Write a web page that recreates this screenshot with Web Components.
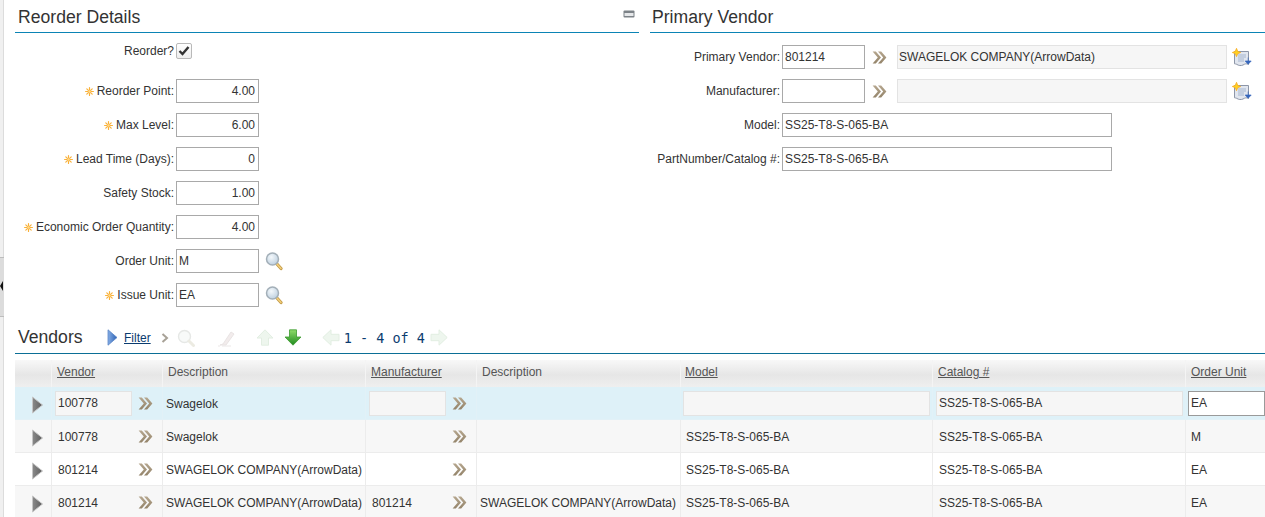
<!DOCTYPE html>
<html>
<head>
<meta charset="utf-8">
<title>Reorder Details</title>
<style>
  html, body { margin: 0; height: 517px; overflow: hidden; background: #fff; }
  body { font: 12px "Liberation Sans", Arial, sans-serif; color: #333; }
</style>
</head>
<body>
<x-shell>
  <x-columns>
    <x-panel title="Reorder Details" pad="1" collapsible>
      <x-field label="Reorder?" no-colon class="first"><x-check></x-check></x-field>
      <x-field label="Reorder Point" required><x-box align="right">4.00</x-box></x-field>
      <x-field label="Max Level" required><x-box align="right">6.00</x-box></x-field>
      <x-field label="Lead Time (Days)" required><x-box align="right">0</x-box></x-field>
      <x-field label="Safety Stock"><x-box align="right">1.00</x-box></x-field>
      <x-field label="Economic Order Quantity" required><x-box align="right">4.00</x-box></x-field>
      <x-field label="Order Unit"><x-box>M</x-box><x-icon name="search" style="margin-left:6px"></x-icon></x-field>
      <x-field label="Issue Unit" required><x-box>EA</x-box><x-icon name="search" style="margin-left:6px"></x-icon></x-field>
    </x-panel>
    <x-panel title="Primary Vendor" pad="7" inset="2" label-width="130px">
      <x-field label="Primary Vendor">
        <x-box>801214</x-box>
        <x-icon name="chevrons" style="margin:0 10px 0 7px"></x-icon>
        <x-box width="330px" readonly>SWAGELOK COMPANY(ArrowData)</x-box>
        <x-icon name="note" style="margin-left:5px"></x-icon>
      </x-field>
      <x-field label="Manufacturer">
        <x-box></x-box>
        <x-icon name="chevrons" style="margin:0 10px 0 7px"></x-icon>
        <x-box width="330px" readonly></x-box>
        <x-icon name="note" style="margin-left:5px"></x-icon>
      </x-field>
      <x-field label="Model"><x-box width="330px">SS25-T8-S-065-BA</x-box></x-field>
      <x-field label="PartNumber/Catalog #"><x-box width="330px">SS25-T8-S-065-BA</x-box></x-field>
    </x-panel>
  </x-columns>
  <x-toolbar title="Vendors"></x-toolbar>
  <x-vendor-table></x-vendor-table>
</x-shell>

<script>
// all the small pictures, drawn to match the old toolbar gifs
const ICONS = {
  star: [9, 9, `<g stroke="#f9b13a" stroke-width="1.2" stroke-linecap="round"><path d="M4.5 .6v7.8M.6 4.5h7.8M1.8 1.8l5.4 5.4M7.2 1.8 1.8 7.2"/></g><circle cx="4.5" cy="4.5" r="1.2" fill="#ffd98a"/>`],
  chevrons: [15, 13, `<defs><linearGradient id="c" x1="0" x2="0" y1="0" y2="1"><stop offset="0" stop-color="#b5a68e"/><stop offset="1" stop-color="#94846a"/></linearGradient></defs>
    <path d="M0.6 .6h3.2L9 6.5 3.8 12.4H.6L5.8 6.5z M6 .6h3.2L14.4 6.5 9.2 12.4H6L11.2 6.5z" fill="url(#c)"/>`],
  search: [18, 20, `<defs><radialGradient id="g" cx=".4" cy=".35" r=".7"><stop offset="0" stop-color="#f4f8fb"/><stop offset="1" stop-color="#bccfdf"/></radialGradient></defs>
    <path d="M11.5 12.5 16 17.5" stroke="#c29a48" stroke-width="3.2" stroke-linecap="round"/><path d="M11.5 12.5 16 17.5" stroke="#f3cf7a" stroke-width="1.5" stroke-linecap="round"/>
    <circle cx="7.5" cy="8" r="6" fill="url(#g)" stroke="#a3afb8" stroke-width="1.5"/>`],
  note: [20, 19, `<path d="M2.5 3.5h14v13c-2-1.3-3.5-.6-5.5.5-2 1-4.5.5-6-.5-.9-.6-2.5-.7-2.5-.7z" fill="#e1e6ef" stroke="#8d96a8"/>
    <path d="M6 7h8M6 9h8M6 11h6M6 13h6" stroke="#a5b6d0"/>
    <path d="M16.2 9.5v3.5M13.2 13h6l-3 3.2z" fill="#3565bb" stroke="#3565bb" stroke-width=".7"/>
    <path d="M4.5 .3 5.7 3.3 8.7 4.5 5.7 5.7 4.5 8.7 3.3 5.7 .3 4.5 3.3 3.3z" fill="#ffd21f" stroke="#f6ac2a" stroke-width=".8"/>`],
  rowArrow: [13, 18, `<defs><linearGradient id="r" x1="0" x2="1"><stop offset="0" stop-color="#8a8a8a"/><stop offset="1" stop-color="#5f5f5f"/></linearGradient></defs>
    <path d="M1.5 1 11.5 9 1.5 17z" fill="url(#r)" stroke="#c5c5c5"/>`],
  filterArrow: [11, 17, `<defs><linearGradient id="b" x1="0" x2="1"><stop offset="0" stop-color="#86aee6"/><stop offset="1" stop-color="#2d62b3"/></linearGradient></defs>
    <path d="M1 .8 10 8.5 1 16.2z" fill="url(#b)" stroke="#5a86c6" stroke-width=".8"/>`],
  gtGray: [8, 10, `<path d="M1.5 1 6 5 1.5 9" fill="none" stroke="#a8a297" stroke-width="2"/>`],
  searchGhost: [18, 18, `<circle cx="7.5" cy="7.5" r="6" fill="#f8faf9" stroke="#e6e8e6" stroke-width="1.4"/><path d="M12 12l4.5 4.5" stroke="#ecebe2" stroke-width="3" stroke-linecap="round"/>`],
  eraserGhost: [18, 18, `<path d="M6 15 14 3l3 2-8 11H3z" fill="#f2ecec" stroke="#e9e4e4"/><path d="M1 17h2M5 17h9" stroke="#ebe7e7"/>`],
  upGhost: [18, 17, `<path d="M9 .8 17 9h-4.5v7.2h-7V9H1z" fill="#eef6ee" stroke="#e2eee2"/>`],
  downGreen: [18, 17, `<defs><linearGradient id="d" x1="0" x2="0" y1="0" y2="1"><stop offset="0" stop-color="#8fdc6a"/><stop offset="1" stop-color="#1f8a1f"/></linearGradient></defs>
    <path d="M5.5 .8h7V8H17l-8 8.2L1 8h4.5z" fill="url(#d)" stroke="#3c9a30" stroke-width=".8"/>`],
  leftGhost: [18, 17, `<path d="M.8 8.5 9 .8v4.5h8v6.4H9v4.5z" fill="#eef6ee" stroke="#e2eee2"/>`],
  rightGhost: [18, 17, `<path d="M17.2 8.5 9 .8v4.5H1v6.4h8v4.5z" fill="#eef6ee" stroke="#e2eee2"/>`],
  minimize: [12, 8, `<rect x=".5" y=".5" width="11" height="7" rx="1" fill="#7d8388"/><rect x="1.5" y="3" width="9" height="3" fill="#e6e8ea"/>`]
};

function define(name, css, html, init) {
  customElements.define(name, class extends HTMLElement {
    connectedCallback() {
      if (this.shadowRoot) return;
      this.attachShadow({ mode: 'open' });
      this.shadowRoot.innerHTML = `<style>${css}</style>${typeof html === 'function' ? html(this) : html}`;
      if (init) init(this);
    }
  });
}

define('x-icon', `
  :host { display: inline-flex; flex: none; line-height: 0; }
`, el => {
  const [w, h, body] = ICONS[el.getAttribute('name')];
  return `<svg width="${w}" height="${h}" viewBox="0 0 ${w} ${h}">${body}</svg>`;
});

define('x-shell', `
  :host { display: flex; height: 517px; }
  .strip { flex: none; width: 3px; height: 517px; background: #f0f0f0; border-right: 1px solid #dcdcdc; position: relative; }
  .grip { margin-top: 257px; height: 60px; background: #dcdcdc; border-top: 1px solid #bdbdbd; border-bottom: 1px solid #bdbdbd; box-sizing: border-box; width: 4px; }
  .tip { position: absolute; left: 0; top: 281px; width: 0; height: 0; border: 5px solid transparent; border-left: 0; border-right: 3px solid #111; }
  .main { flex: 1; min-width: 0; padding-left: 11px; }
`, `<div class="strip"><div class="grip"></div><div class="tip"></div></div><div class="main"><slot></slot></div>`);

define('x-columns', `
  :host { display: grid; grid-template-columns: 624px 615px; column-gap: 11px; height: 320px; }
`, `<slot></slot>`);

define('x-panel', `
  :host { display: block; }
  header { display: flex; justify-content: space-between; height: 32px; border-bottom: 1px solid #0b84b5; padding: 0 4px 0 3px; }
  h2 { margin: 0; font-weight: normal; font-size: 17.6px; line-height: 34px; color: #333; }
  x-icon { margin-top: 10px; }
`, el => `
  <header style="padding-left:${el.getAttribute('inset') || 3}px"><h2>${el.getAttribute('title')}</h2>${el.hasAttribute('collapsible') ? '<x-icon name="minimize"></x-icon>' : ''}</header>
  <div style="padding-top:${el.getAttribute('pad') || 0}px;--label-width:${el.getAttribute('label-width') || '159px'}"><slot></slot></div>
`);

define('x-field', `
  :host { display: flex; align-items: center; height: 34px; }
  :host(.first) { margin-bottom: 6px; }
  label { flex: none; width: var(--label-width); margin-right: 2px; display: flex; justify-content: flex-end; align-items: center; gap: 3px; white-space: nowrap; }
  .controls { display: flex; align-items: center; }
`, el => `
  <label>${el.hasAttribute('required') ? '<x-icon name="star"></x-icon>' : ''}<span>${el.getAttribute('label')}${el.hasAttribute('no-colon') ? '' : ':'}</span></label>
  <div class="controls"><slot></slot></div>
`);

define('x-box', `
  :host { display: block; flex: none; box-sizing: border-box; width: 83px; height: 24px; line-height: 22px; padding: 0 2px; border: 1px solid #a9a9a9; background: #fff; color: #333; white-space: nowrap; overflow: hidden; }
  :host([align=right]) { text-align: right; padding-right: 3px; }
  :host([readonly]) { background: #f6f6f6; border-color: #e3e3e3; padding-left: 1px; }
`, el => {
  if (el.getAttribute('width')) el.style.width = el.getAttribute('width');
  return `<slot></slot>`;
});

define('x-check', `
  :host { display: block; width: 16px; height: 16px; box-sizing: border-box; border: 1px solid #b9b9b9; border-radius: 2px; background: linear-gradient(#fff, #eee); line-height: 0; }
`, `<svg width="14" height="14" viewBox="0 0 14 14"><path d="M2.5 7 5.5 10 11.5 3" fill="none" stroke="#333" stroke-width="2.4"/></svg>`);

define('x-toolbar', `
  :host { display: flex; align-items: center; height: 31px; padding: 2px 0 0 3px; border-bottom: 1px solid #0b6f96; }
  h2 { margin: 0; width: 89px; font-weight: normal; font-size: 17.6px; color: #333; }
  a { color: #0b3c6f; text-decoration: underline; margin: 0 10px 0 6px; }
  x-icon { flex: none; }
  .pages { font: 13.5px "DejaVu Sans Mono", monospace; color: #0b3c6f; margin: 0 5px 0 4px; white-space: pre; }
`, el => `
  <h2>${el.getAttribute('title')}</h2>
  <x-icon name="filterArrow"></x-icon><a href="#">Filter</a>
  <x-icon name="gtGray"></x-icon>
  <x-icon name="searchGhost" style="margin-left:8px"></x-icon>
  <x-icon name="eraserGhost" style="margin-left:22px"></x-icon>
  <x-icon name="upGhost" style="margin-left:21px"></x-icon>
  <x-icon name="downGreen" style="margin-left:10px"></x-icon>
  <x-icon name="leftGhost" style="margin-left:20px"></x-icon>
  <span class="pages">1 - 4 of 4</span>
  <x-icon name="rightGhost"></x-icon>
`);

const COLS = ['Vendor', 'Description', 'Manufacturer', 'Description', 'Model', 'Catalog #', 'Order Unit'];
const SORTABLE = [true, false, true, false, true, true, true];
const ROWS = [
  ['100778', 'Swagelok', '', '', '', 'SS25-T8-S-065-BA', 'EA'],
  ['100778', 'Swagelok', '', '', 'SS25-T8-S-065-BA', 'SS25-T8-S-065-BA', 'M'],
  ['801214', 'SWAGELOK COMPANY(ArrowData)', '', '', 'SS25-T8-S-065-BA', 'SS25-T8-S-065-BA', 'EA'],
  ['801214', 'SWAGELOK COMPANY(ArrowData)', '801214', 'SWAGELOK COMPANY(ArrowData)', 'SS25-T8-S-065-BA', 'SS25-T8-S-065-BA', 'EA']
];

define('x-vendor-table', `
  :host { display: block; margin-top: 6px; color: #333; }
  .row { display: grid; grid-template-columns: 37px 111px 203px 111px 204px 252px 253px 79px; height: 33px; }
  .head { height: 27px; background: linear-gradient(#f8f8f8 0, #e6e6e6 55%, #efefef 100%); }
  .row:nth-child(odd):not(.head) { background: #f7f7f7; }
  .row.sel { background: #def1f8 !important; }
  .cell { display: flex; align-items: center; box-sizing: border-box; min-width: 0; white-space: nowrap; border-right: 1px solid #ececec; border-bottom: 1px solid #ececec; padding: 1px 0 0 3px; }
  .head .cell { border-bottom: 0; border-right-color: #f4f4f4; color: #555; padding: 0 0 3px 5px; }
  .head .cell.u { text-decoration: underline; }
  .head .cell.model { padding-left: 4px; }
  .cell:last-child { border-right: 0; }
  .cell.arrow { padding: 3px 0 0 16px; }
  .sel .cell { border-color: #e2f1f7; }
  .cell.m { padding-left: 2px; }
  .lookup { display: flex; align-items: center; }
  .val { box-sizing: border-box; width: 77px; height: 25px; line-height: 25px; padding: 1px 0 0 3px; }
  .lookup x-icon { margin-left: 6px; }
  .box { box-sizing: border-box; height: 25px; line-height: 23px; padding-left: 2px; border: 1px solid #e3e3e3; background: #f6f6f6; }
  .box.w { width: 247px; }
  .box.edit { width: 77px; margin-left: -1px; background: #fff; border-color: #9a9a9a; }
  .selval { line-height: 23px; padding: 0 0 0 2px; background: #f6f6f6; border: 1px solid #e3e3e3; }
`, `<div class="t"></div>`, el => {
  const t = el.shadowRoot.querySelector('.t');
  let html = '<div class="row head"><div class="cell"></div>' +
    COLS.map((c, i) => `<div class="cell ${SORTABLE[i] ? 'u' : ''} ${c === 'Model' ? 'model' : ''}">${c}</div>`).join('') + '</div>';
  ROWS.forEach((r, n) => {
    const sel = n === 0;
    const lookup = v => `<div class="cell"><div class="lookup"><div class="val ${sel ? 'selval' : ''}">${v}</div><x-icon name="chevrons"></x-icon></div></div>`;
    html += `<div class="row ${sel ? 'sel' : ''}">
      <div class="cell arrow"><x-icon name="rowArrow"></x-icon></div>
      ${lookup(r[0])}
      <div class="cell">${r[1]}</div>
      ${lookup(r[2])}
      <div class="cell">${r[3]}</div>
      <div class="cell m">${sel ? `<div class="box w">${r[4]}</div>` : `<span style="padding-left:3px">${r[4]}</span>`}</div>
      <div class="cell">${sel ? `<div class="box w">${r[5]}</div>` : `<span style="padding-left:3px">${r[5]}</span>`}</div>
      <div class="cell">${sel ? `<div class="box edit">${r[6]}</div>` : `<span style="padding-left:2px">${r[6]}</span>`}</div>
    </div>`;
  });
  t.innerHTML = html;
});
</script>
</body>
</html>
